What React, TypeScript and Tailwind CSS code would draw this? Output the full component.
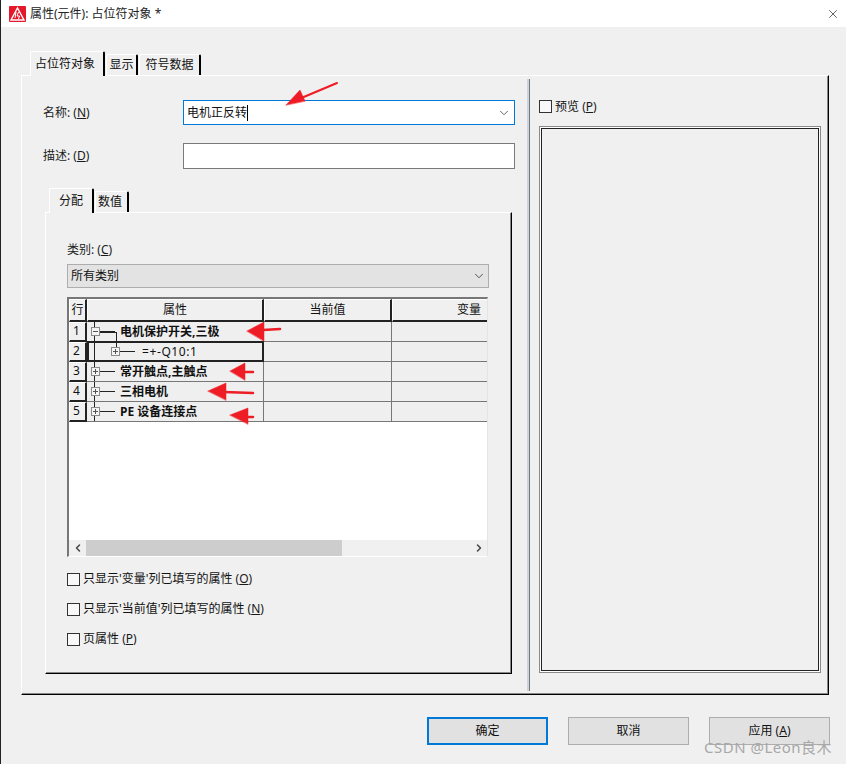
import React from "react";
import { ChevronDown, ChevronLeft, ChevronRight, X } from "lucide-react";

const Hotkey = ({ k }: { k: string }) => (
  <span className="text-[#1a1a1a]">
    (<span className="underline">{k}</span>)
  </span>
);

const Tab = ({ label, active, w }: { label: string; active?: boolean; w: string }) => (
  <div
    className={`${w} ${
      active ? "h-[25px] z-10 -mb-px" : "h-[21px]"
    } flex items-center justify-center bg-[#f0f0f0] border-l border-t border-white border-r-2 border-r-black rounded-t-[2px] text-[12px] text-[#111]`}
  >
    {label}
  </div>
);

const Expander = ({ open }: { open?: boolean }) => (
  <span className="relative z-10 flex h-[9px] w-[9px] shrink-0 items-center justify-center border border-[#8a8a8a] bg-[#f4f4f4]">
    <span className="absolute h-px w-[5px] bg-[#555]" />
    {!open && <span className="absolute h-[5px] w-px bg-[#555]" />}
  </span>
);

const rows = [
  { n: 1, text: "电机保护开关,三极", bold: true, open: true },
  { n: 2, text: "=+-Q10:1", child: true },
  { n: 3, text: "常开触点,主触点", bold: true },
  { n: 4, text: "三相电机", bold: true },
  { n: 5, text: "PE 设备连接点", bold: true },
];

const Row = ({ n, text, bold, open, child }: { n: number; text: string; bold?: boolean; open?: boolean; child?: boolean }) => (
  <div className="flex h-[20px] shrink-0 text-[12px]">
    <div className="w-[18px] shrink-0 border-l border-t border-white border-r-2 border-b-2 border-r-[#222] border-b-[#222] bg-[#f0f0f0] pl-[3px] leading-[16px] text-[#111]">
      {n}
    </div>
    <div
      className={`relative flex w-[177px] shrink-0 items-center bg-[#efefef] ${
        child ? "border-2 border-[#222] -mt-px h-[21px]" : "border-b border-r border-[#777]"
      }`}
    >
      <span className={`absolute ${child ? "left-[5px]" : "left-[7px]"} top-0 bottom-0 w-px bg-[#222]`} />
      {child ? (
        <>
          <span className="absolute left-[27px] top-0 h-[7px] w-px bg-[#222]" />
          <span className="ml-[22px]"><Expander /></span>
          <span className="h-px w-[15px] bg-[#222]" />
          <span className="ml-[7px] text-[#111] tracking-[0.6px]">{text}</span>
        </>
      ) : (
        <>
          <span className="ml-[4px]"><Expander open={open} /></span>
          <span className="h-px w-[15px] bg-[#222]" />
          {open && <span className="absolute left-[12px] top-[10px] h-px w-[17px] bg-[#222]" />}
          {open && <span className="absolute left-[29px] top-[10px] h-[10px] w-px bg-[#222]" />}
          <span className={`ml-[5px] text-[#111] ${bold ? "font-bold" : ""}`}>{text}</span>
        </>
      )}
    </div>
    <div className="w-[128px] shrink-0 border-b border-r border-[#777] bg-[#efefef]" />
    <div className="flex-1 border-b border-[#777] bg-[#efefef]" />
  </div>
);

const Check = ({ children }: { children: React.ReactNode }) => (
  <div className="flex h-[16px] items-center gap-[3px] text-[12px] text-[#111]">
    <span className="h-[13px] w-[13px] shrink-0 border border-[#333] bg-[#f8f8f8]" />
    <span>{children}</span>
  </div>
);

const Button = ({ children, primary }: { children: React.ReactNode; primary?: boolean }) => (
  <button
    className={`h-[28px] w-[121px] bg-[#e1e1e1] text-[12px] leading-[16px] text-[#111] ${
      primary ? "border-2 border-[#0078d7]" : "border border-[#adadad]"
    }`}
  >
    {children}
  </button>
);

export default function App() {
  return (
    <div className="relative flex h-[764px] w-[846px] flex-col overflow-hidden border-l border-l-[#222] bg-[#f0f0f0] font-['Noto_Sans','Noto_Sans_CJK_SC',sans-serif]">
      <div className="flex h-[27px] shrink-0 items-center bg-white pl-[8px] pr-[6px] text-[12px] text-[#222]">
        <svg width="17" height="16" viewBox="0 0 17 16" className="shrink-0">
          <rect width="17" height="16" rx="1" fill="#e5172b" />
          <path d="M8.5 2 L15 14 H2 Z" fill="none" stroke="#fff" strokeWidth="1.4" />
          <path d="M7 6 L6 12 M9.5 6 L8 10 H10.5 L9.5 13" fill="none" stroke="#fff" strokeWidth="1" />
        </svg>
        <span className="ml-[4px]">属性(元件): 占位符对象 *</span>
        <X className="ml-auto h-[14px] w-[14px] text-[#222]" strokeWidth={1.2} />
      </div>

      <div className="mx-[20px] mt-[24px] flex shrink-0 items-end gap-px pl-[9px]">
        <Tab label="占位符对象" active w="w-[75px] pr-[4px]" />
        <Tab label="显示" w="w-[32px]" />
        <Tab label="符号数据" w="w-[62px]" />
      </div>

      <div className="ml-[20px] flex h-[620px] w-[808px] shrink-0 border-l border-t border-white border-r border-b border-r-black border-b-black shadow-[inset_-1px_-1px_0_#888]">
        <div className="w-[505px] shrink-0">
          <div className="mt-[24px] flex h-[25px] items-center pl-[21px] text-[12px] text-[#222]">
            <span className="w-[140px] shrink-0">名称: <Hotkey k="N" /></span>
            <div className="flex h-[25px] w-[332px] items-center border-[1.5px] border-[#0078d7] bg-white pl-[3px] pr-[3px] text-[12px] text-[#111]">
              <span className="border-r border-black leading-[16px]">电机正反转</span>
              <ChevronDown className="ml-auto h-[14px] w-[14px] text-[#444]" strokeWidth={1.4} />
            </div>
          </div>
          <div className="mt-[18px] flex h-[26px] items-center pl-[21px] text-[12px] text-[#222]">
            <span className="w-[140px] shrink-0">描述: <Hotkey k="D" /></span>
            <div className="h-[26px] w-[332px] border border-[#7a7a7a] bg-white" />
          </div>

          <div className="ml-[27px] mt-[19px] flex items-end gap-px">
            <Tab label="分配" active w="w-[45px]" />
            <Tab label="数值" w="w-[34px] pr-[3px]" />
          </div>
          <div className="ml-[23px] h-[462px] w-[467px] border-l border-t border-white border-r border-b border-r-black border-b-black pl-[21px] shadow-[inset_-1px_-1px_0_#888]">
            <div className="mt-[29px] h-[16px] text-[12px] leading-[16px] text-[#222]">类别: <Hotkey k="C" /></div>
            <div className="mt-[6px] flex h-[24px] w-[422px] items-center border border-[#adadad] bg-[#e3e3e3] pl-[3px] pr-[2px] text-[12px] text-[#111]">
              所有类别
              <ChevronDown className="ml-auto h-[14px] w-[14px] text-[#333]" strokeWidth={1.4} />
            </div>

            <div className="mt-[9px] flex h-[260px] w-[421px] flex-col overflow-hidden border-l-2 border-t-2 border-[#777] border-r border-r-[#e4e4e4] border-b border-b-white bg-white">
              <div className="flex h-[23px] shrink-0 text-[12px] text-[#111]">
                <div className="flex w-[18px] shrink-0 items-center justify-center border-l border-t border-white border-r-2 border-b-2 border-r-[#222] border-b-[#222] bg-[#f0f0f0]">行</div>
                <div className="flex w-[177px] shrink-0 items-center justify-center border-l border-t border-white border-r-2 border-b-2 border-r-[#222] border-b-[#222] bg-[#f0f0f0]">属性</div>
                <div className="flex w-[128px] shrink-0 items-center justify-center border-l border-t border-white border-r-2 border-b-2 border-r-[#222] border-b-[#222] bg-[#f0f0f0]">当前值</div>
                <div className="flex flex-1 items-center border-l border-t border-white border-b-2 border-b-[#222] bg-[#f0f0f0] pl-[64px]">变量</div>
              </div>
              {rows.map((r) => (
                <Row key={r.n} {...r} />
              ))}
              <div className="flex-1 bg-white" />
              <div className="flex h-[16px] shrink-0 items-center bg-[#f0f0f0]">
                <div className="flex h-full w-[17px] shrink-0 items-center justify-center">
                  <ChevronLeft className="h-[12px] w-[12px] text-[#444]" strokeWidth={3} />
                </div>
                <div className="h-full w-[256px] bg-[#cdcdcd]" />
                <div className="ml-auto flex h-full w-[17px] items-center justify-center">
                  <ChevronRight className="h-[12px] w-[12px] text-[#444]" strokeWidth={3} />
                </div>
              </div>
            </div>

            <div className="mt-[14px] flex flex-col gap-[14px]">
              <Check>只显示'变量'列已填写的属性 <Hotkey k="O" /></Check>
              <Check>只显示'当前值'列已填写的属性 <Hotkey k="N" /></Check>
              <Check>页属性 <Hotkey k="P" /></Check>
            </div>
          </div>
        </div>

        <div className="my-[3px] flex w-[3px] shrink-0">
          <span className="w-[2px] bg-[#ccd3e4]" />
          <span className="w-px bg-[#777]" />
        </div>

        <div className="flex-1 pl-[9px]">
          <div className="mt-[24px] flex h-[13px] items-center gap-[3px] text-[12px] text-[#111]">
            <span className="h-[13px] w-[13px] shrink-0 border border-[#333] bg-[#f8f8f8]" />
            <span>预览 <Hotkey k="P" /></span>
          </div>
          <div className="mt-[13px] h-[547px] w-[282px] border-2 border-[#8a8a8a] p-0">
            <div className="h-full w-full border border-[#222] outline outline-white" />
          </div>
        </div>
      </div>

      <div className="mt-[22px] flex gap-[20px] pl-[426px]">
        <Button primary>确定</Button>
        <Button>取消</Button>
        <Button>应用 (<span className="underline">A</span>)</Button>
      </div>

      {/* red annotation arrows drawn over the dialog */}
      <svg className="pointer-events-none absolute left-0 top-0 z-20" width="846" height="764" viewBox="0 0 846 764">
        <g fill="#ee1c25" stroke="#ee1c25" strokeLinecap="round">
          <path d="M336 83 L298 99" strokeWidth="2" fill="none" />
          <path d="M285 105 L299 90 L304 101 Z" strokeWidth="0.5" />
          <path d="M262 330 L279 329" strokeWidth="2.5" fill="none" />
          <path d="M246 331 L263 322 L263 341 Z" strokeWidth="0.5" />
          <path d="M242 372 L252 372" strokeWidth="2.5" fill="none" />
          <path d="M229 371 L244 363 L244 380 Z" strokeWidth="0.5" />
          <path d="M223 392 L252 393" strokeWidth="2.5" fill="none" />
          <path d="M207 391 L225 383 L225 400 Z" strokeWidth="0.5" />
          <path d="M245 417 L252 417" strokeWidth="2.5" fill="none" />
          <path d="M229 415 L247 408 L247 424 Z" strokeWidth="0.5" />
        </g>
      </svg>

      <span className="absolute left-[703px] top-[739px] z-20 text-[15px] leading-[16px] tracking-[0.5px] text-[#a8a8a8]">CSDN @Leon良木</span>
    </div>
  );
}
